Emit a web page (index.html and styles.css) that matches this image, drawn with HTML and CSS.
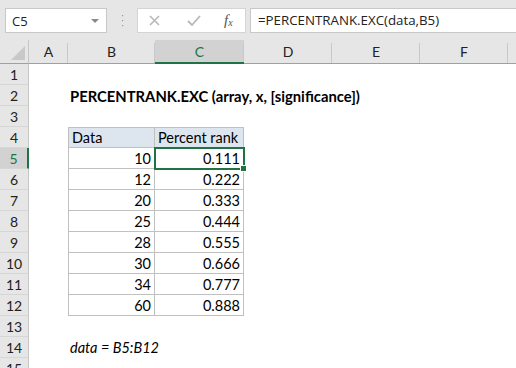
FILE: index.html
```html
<!DOCTYPE html>
<html>
<head>
<meta charset="utf-8">
<link rel="stylesheet" href="styles.css">
</head>
<body>
<div class="app">
  <div class="fbar">
    <div class="namebox">
      <span class="nb-text">C5</span>
      <svg class="nb-arrow" width="8" height="5" viewBox="0 0 8 5"><path d="M0 0 H8 L4 4 Z" fill="#8a8a8a"/></svg>
    </div>
    <div class="grip">
      <svg width="3" height="12" viewBox="0 0 3 12"><rect x="1" y="0" width="1.2" height="1.2" fill="#9a9a9a"/><rect x="1" y="5" width="1.2" height="1.2" fill="#9a9a9a"/><rect x="1" y="10" width="1.2" height="1.2" fill="#9a9a9a"/></svg>
    </div>
    <div class="fbtns">
      <svg class="ic-x" width="11" height="11" viewBox="0 0 11 11"><path d="M1 1 L10 10 M10 1 L1 10" stroke="#b8b8b8" stroke-width="1.6" fill="none"/></svg>
      <svg class="ic-ok" width="14" height="11" viewBox="0 0 14 11"><path d="M1 6 L5 10 L13 1" stroke="#b8b8b8" stroke-width="1.8" fill="none"/></svg>
      <span class="fx">f<sub>x</sub></span>
    </div>
    <div class="finput">=PERCENTRANK.EXC(data,B5)</div>
  </div>
  <div class="sheet">
    <div class="corner"><svg width="14" height="14" viewBox="0 0 14 14"><path d="M14 0 V14 H0 Z" fill="#c8c8c8"/></svg></div>
    <div class="ch">A</div><div class="ch">B</div><div class="ch sel">C</div><div class="ch">D</div><div class="ch">E</div><div class="ch">F</div><div class="ch last"></div>

    <div class="rh">1</div><div></div><div></div><div></div><div></div><div></div><div></div><div></div>
    <div class="rh">2</div><div></div><div class="c title">PERCENTRANK.EXC (array, x, [significance])</div><div></div><div></div><div></div><div></div><div></div>
    <div class="rh">3</div><div></div><div></div><div></div><div></div><div></div><div></div><div></div>
    <div class="rh">4</div><div></div><div class="c t tb thd top">Data</div><div class="c t thd top">Percent rank</div><div></div><div></div><div></div><div></div>
    <div class="rh rsel">5</div><div></div><div class="c t tb num">10</div><div class="c t num active">0.111</div><div></div><div></div><div></div><div></div>
    <div class="rh">6</div><div></div><div class="c t tb num">12</div><div class="c t num">0.222</div><div></div><div></div><div></div><div></div>
    <div class="rh">7</div><div></div><div class="c t tb num">20</div><div class="c t num">0.333</div><div></div><div></div><div></div><div></div>
    <div class="rh">8</div><div></div><div class="c t tb num">25</div><div class="c t num">0.444</div><div></div><div></div><div></div><div></div>
    <div class="rh">9</div><div></div><div class="c t tb num">28</div><div class="c t num">0.555</div><div></div><div></div><div></div><div></div>
    <div class="rh">10</div><div></div><div class="c t tb num">30</div><div class="c t num">0.666</div><div></div><div></div><div></div><div></div>
    <div class="rh">11</div><div></div><div class="c t tb num">34</div><div class="c t num">0.777</div><div></div><div></div><div></div><div></div>
    <div class="rh">12</div><div></div><div class="c t tb num">60</div><div class="c t num">0.888</div><div></div><div></div><div></div><div></div>
    <div class="rh">13</div><div></div><div></div><div></div><div></div><div></div><div></div><div></div>
    <div class="rh">14</div><div></div><div class="c note">data = B5:B12</div><div></div><div></div><div></div><div></div><div></div>
    <div class="rh">15</div><div></div><div></div><div></div><div></div><div></div><div></div><div></div>
  </div>
</div>
</body>
</html>
```
FILE: styles.css
```css
html, body {
  margin: 0;
  padding: 0;
  background: #ffffff;
}
.app {
  width: 516px;
  height: 368px;
  overflow: hidden;
  font-family: "Lato", "Liberation Sans", sans-serif;
}
.fbar {
  height: 40px;
  box-sizing: border-box;
  background: #e6e6e6;
  display: flex;
  align-items: flex-start;
  padding: 8px 0 0 5px;
}
.namebox {
  width: 102px;
  height: 25px;
  box-sizing: border-box;
  background: #fff;
  border: 1px solid #c8c8c8;
  display: flex;
  align-items: center;
  justify-content: space-between;
  padding: 0 7px 0 6px;
  font-family: "Open Sans", sans-serif;
  font-size: 13px;
  color: #222;
}
.nb-arrow { margin-top: 1px; }
.grip {
  width: 30px;
  height: 25px;
  display: flex;
  align-items: center;
  justify-content: center;
}
.fbtns {
  width: 109px;
  height: 25px;
  box-sizing: border-box;
  background: #fff;
  border: 1px solid #d4d4d4;
  display: flex;
  align-items: center;
  padding: 0 10px 0 11px;
}
.ic-x { margin-right: 27px; }
.ic-ok { margin-right: 23px; }
.fx {
  font-family: "Liberation Serif", serif;
  font-style: italic;
  font-size: 15px;
  color: #555;
  line-height: 1;
}
.fx sub {
  font-size: 10px;
  vertical-align: -1px;
}
.finput {
  flex: 1;
  height: 25px;
  margin-left: 4px;
  box-sizing: border-box;
  background: #fff;
  border: 1px solid #c8c8c8;
  border-right: none;
  padding: 0 0 0 7px;
  font-family: "Open Sans", sans-serif;
  font-size: 13.3px;
  line-height: 23px;
  color: #222;
}
.sheet {
  display: grid;
  grid-template-columns: 29px 39px 87px 89px 88px 88px 88px 8px;
  grid-template-rows: 24px repeat(15, 21px);
  background: #fff;
}
.corner {
  background: #e6e6e6;
  border-right: 1px solid #c6c6c6;
  border-bottom: 1px solid #a0a0a0;
  box-sizing: border-box;
  display: flex;
  align-items: flex-end;
  justify-content: flex-end;
  padding: 0 3px 3px 0;
}
.ch {
  background: #e6e6e6;
  border-bottom: 1px solid #a0a0a0;
  box-sizing: border-box;
  position: relative;
  text-align: center;
  font-size: 14px;
  line-height: 24px;
  color: #222;
}
.ch::after {
  content: "";
  position: absolute;
  right: 0;
  top: 3px;
  bottom: 0;
  width: 1px;
  background: #c8c8c8;
}
.ch.last::after { display: none; }
.ch.sel {
  background: #d2d2d2;
  border-bottom: 2px solid #217346;
  color: #217346;
}
.rh {
  background: #e6e6e6;
  border-right: 1px solid #c6c6c6;
  border-bottom: 1px solid #d6d6d6;
  box-sizing: border-box;
  text-align: center;
  font-size: 14px;
  line-height: 22px;
  color: #222;
}
.rh.rsel {
  background: #d2d2d2;
  border-right: 2px solid #217346;
  color: #217346;
}
.c {
  box-sizing: border-box;
  font-size: 14.5px;
  line-height: 22px;
  color: #000;
  white-space: nowrap;
  padding: 0 3px;
}
.t {
  border-right: 1px solid #c0c0c0;
  border-bottom: 1px solid #c0c0c0;
}
.tb { border-left: 1px solid #c0c0c0; }
.top { border-top: 1px solid #c0c0c0; line-height: 20px; }
.thd { background: #dde5ef; }
.num { text-align: right; }
.title {
  font-weight: bold;
  font-size: 14.8px;
  padding-left: 2px;
}
.note {
  font-style: italic;
  padding-left: 2px;
}
.active {
  position: relative;
  outline: 2px solid #217346;
  outline-offset: -1px;
}
.active::after {
  content: "";
  position: absolute;
  right: -4px;
  bottom: -4px;
  width: 5px;
  height: 5px;
  background: #217346;
  border: 1px solid #fff;
}
```
